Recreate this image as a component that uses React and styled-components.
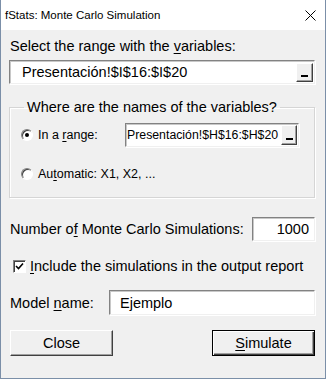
import React from "react";
import styled, { createGlobalStyle } from "styled-components";

const Global = createGlobalStyle`
  html, body { margin: 0; padding: 0; background: #ffffff; }
  * { box-sizing: border-box; }
`;

const Window = styled.div`
  width: 326px;
  height: 379px;
  background: #f0f0f0;
  border: 1px solid #7b8fa8;
  border-top: none;
  display: flex;
  flex-direction: column;
  font-family: "Liberation Sans", Arial, sans-serif;
  color: #000;
`;

const TitleBar = styled.div`
  height: 30px;
  background: #ffffff;
  display: flex;
  align-items: center;
  justify-content: space-between;
  padding: 0 9px 0 4px;
  font-size: 11.5px;
`;

const Body = styled.div`
  display: flex;
  flex-direction: column;
  padding: 0 10px 0 8px;
`;

const Label = styled.div`
  font-size: ${(p) => p.$size || 14.5}px;
  line-height: 18px;
  white-space: nowrap;
  margin-top: ${(p) => p.$mt || 0}px;
`;

const U = styled.span`
  text-decoration: underline;
  text-underline-offset: 2px;
`;

const Field = styled.div`
  display: flex;
  align-items: center;
  height: ${(p) => p.$h || 24}px;
  width: ${(p) => (p.$w ? p.$w + "px" : "auto")};
  flex: ${(p) => (p.$w ? "none" : "1")};
  background: #ffffff;
  border-style: solid;
  border-width: 1px;
  border-color: #828282 #f0f0f0 #f0f0f0 #828282;
  box-shadow: inset 1px 1px 0 #c8c8c8, 1px 1px 0 #ffffff;
  padding: ${(p) => p.$pad || "0 2px 0 12px"};
  font-size: ${(p) => p.$size || 14.5}px;
  margin-top: ${(p) => p.$mt || 0}px;
`;

const FieldText = styled.span`
  flex: 1;
  white-space: nowrap;
  overflow: hidden;
  text-align: ${(p) => (p.$right ? "right" : "left")};
`;

const PickButton = styled.div`
  width: ${(p) => p.$w || 17}px;
  height: ${(p) => p.$h || 19}px;
  flex: none;
  background: #f0f0f0;
  border-style: solid;
  border-width: 1px;
  border-color: #ffffff #404040 #404040 #ffffff;
  box-shadow: inset -1px -1px 0 #a0a0a0;
  display: flex;
  align-items: flex-end;
  justify-content: center;
  padding-bottom: 4px;
`;

const Dash = styled.div`
  width: 7px;
  height: 2px;
  background: #000;
`;

const Group = styled.fieldset`
  margin: 15px 0 0 0;
  padding: 4px 8px 12px 11px;
  border: 1px solid #d5d5d5;
  box-shadow: 1px 1px 0 #ffffff, inset 1px 1px 0 #ffffff;
  min-width: 0;
  height: 99px;
`;

const Legend = styled.legend`
  font-size: 14.5px;
  padding: 0 3px;
  margin-left: 3px;
  line-height: 16px;
`;

const Row = styled.div`
  display: flex;
  align-items: center;
  gap: ${(p) => p.$gap || 0}px;
  margin-top: ${(p) => p.$mt || 0}px;
  justify-content: ${(p) => p.$justify || "flex-start"};
`;

const RadioLabel = styled.div`
  display: flex;
  align-items: center;
  gap: 5px;
  font-size: 12.5px;
  width: ${(p) => (p.$w ? p.$w + "px" : "auto")};
  flex: none;
  white-space: nowrap;
`;

const RadioCircle = styled.div`
  width: 12px;
  height: 12px;
  border-radius: 50%;
  background: #ffffff;
  border: 1px solid;
  border-color: #808080 #ffffff #ffffff #808080;
  box-shadow: inset 1px 1px 0 #404040;
  display: flex;
  align-items: center;
  justify-content: center;
`;

const Dot = styled.div`
  width: 4px;
  height: 4px;
  border-radius: 50%;
  background: #000;
`;

const CheckBox = styled.div`
  width: 13px;
  height: 13px;
  background: #fff;
  border: 1px solid;
  border-color: #808080 #ffffff #ffffff #808080;
  box-shadow: inset 1px 1px 0 #404040;
  display: flex;
  align-items: center;
  justify-content: center;
  flex: none;
`;

const Button = styled.div`
  width: 103px;
  height: 26px;
  background: #f0f0f0;
  display: flex;
  align-items: center;
  justify-content: center;
  font-size: 14.5px;
  border-style: solid;
  border-width: 1px;
  border-color: ${(p) => (p.$default ? "#000000" : "#ffffff #404040 #404040 #ffffff")};
  box-shadow: ${(p) =>
    p.$default
      ? "inset 1px 1px 0 #ffffff, inset -1px -1px 0 #404040, inset -2px -2px 0 #a0a0a0"
      : "inset -1px -1px 0 #a0a0a0"};
`;

export default function App() {
  return (
    <>
      <Global />
      <Window>
        <TitleBar>
          <span>fStats: Monte Carlo Simulation</span>
          <svg width="11" height="11" viewBox="0 0 11 11">
            <path d="M0.5 0.5 L10.5 10.5 M10.5 0.5 L0.5 10.5" stroke="#000" strokeWidth="1" />
          </svg>
        </TitleBar>
        <Body>
          <Label $mt={7} style={{ paddingLeft: 1 }}>
            Select the range with the <U>v</U>ariables:
          </Label>
          <Row $mt={5}>
            <Field $h={24} $pad="0 1px 0 12px">
              <FieldText>Presentación!$I$16:$I$20</FieldText>
              <PickButton>
                <Dash />
              </PickButton>
            </Field>
          </Row>
          <Group>
            <Legend>Where are the names of the variables?</Legend>
            <Row $mt={4}>
              <RadioLabel $w={104}>
                <RadioCircle>
                  <Dot />
                </RadioCircle>
                <span>
                  In a <U>r</U>ange:
                </span>
              </RadioLabel>
              <Field $w={174} $h={24} $size={12.3} $pad="0 1px 0 1px">
                <FieldText>Presentación!$H$16:$H$20</FieldText>
                <PickButton $w={16} $h={20}>
                  <Dash />
                </PickButton>
              </Field>
            </Row>
            <Row $mt={20}>
              <RadioLabel>
                <RadioCircle />
                <span>
                  Au<U>t</U>omatic: X1, X2, ...
                </span>
              </RadioLabel>
            </Row>
          </Group>
          <Row $mt={19} $justify="space-between">
            <Label style={{ paddingLeft: 1 }}>
              Number o<U>f</U> Monte Carlo Simulations:
            </Label>
            <Field $w={63} $h={24} $pad="0 5px 0 4px">
              <FieldText $right>1000</FieldText>
            </Field>
          </Row>
          <Row $mt={16} $gap={4} style={{ paddingLeft: 4 }}>
            <CheckBox>
              <svg width="9" height="9" viewBox="0 0 9 9">
                <path d="M1 4 L3.5 6.5 L8 1.5" stroke="#000" strokeWidth="1.6" fill="none" />
              </svg>
            </CheckBox>
            <Label>
              <U>I</U>nclude the simulations in the output report
            </Label>
          </Row>
          <Row $mt={15} $justify="space-between">
            <Label style={{ paddingLeft: 1 }}>
              Model <U>n</U>ame:
            </Label>
            <Field $w={206} $h={25} $pad="0 2px 0 10px">
              <FieldText>Ejemplo</FieldText>
            </Field>
          </Row>
          <Row $mt={15} $justify="space-between" style={{ paddingLeft: 1 }}>
            <Button>Close</Button>
            <Button $default>
              <span>
                <U>S</U>imulate
              </span>
            </Button>
          </Row>
        </Body>
      </Window>
    </>
  );
}
